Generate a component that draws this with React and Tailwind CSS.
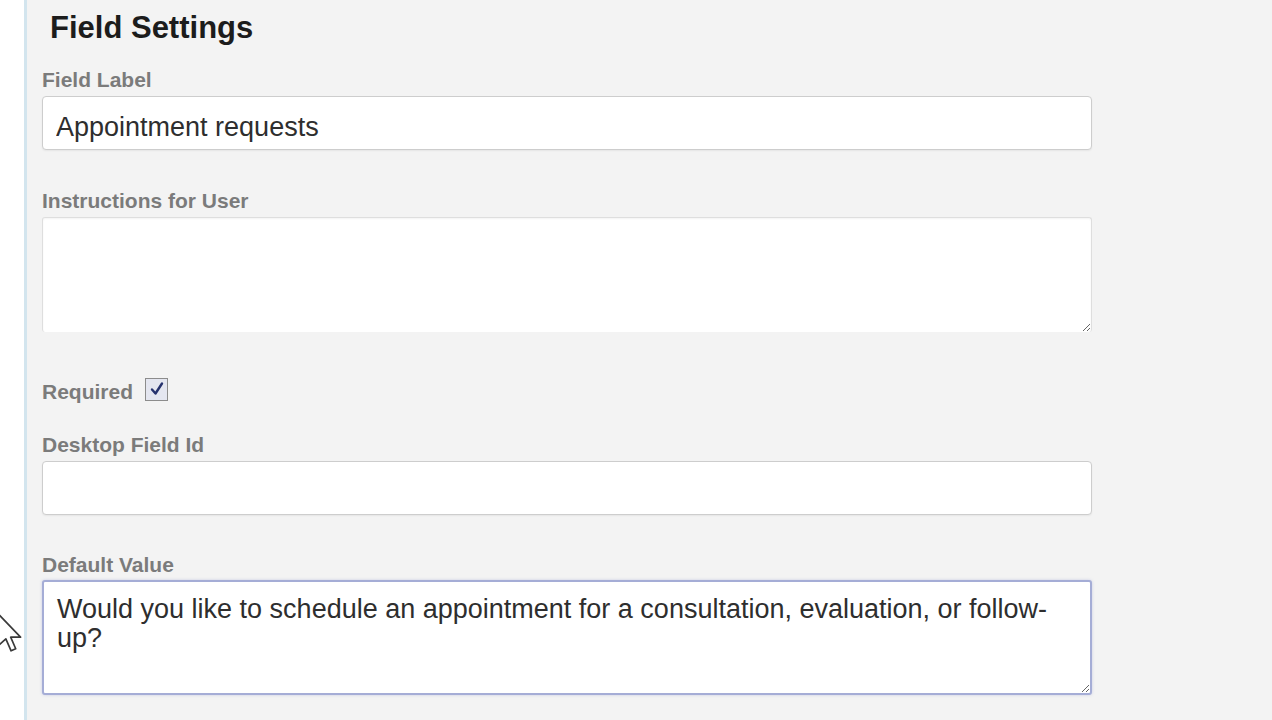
import React from 'react'

function Label({ children, className = '' }) {
  return (
    <label className={`block text-[21px] leading-[24px] font-bold text-[#7b7b7b] ${className}`}>
      {children}
    </label>
  )
}

function TextInput({ value = '' }) {
  return (
    <input
      type="text"
      defaultValue={value}
      className="block w-full h-[54px] px-[13px] pt-[9px] bg-white border border-[#cdcdcd] rounded-[4px] shadow-[0_1px_2px_rgba(0,0,0,0.06)] text-[27px] text-[#2e2e2e] outline-none"
    />
  )
}

function Cursor() {
  return (
    <svg
      className="absolute left-[-4px] top-[612px]"
      width="26"
      height="42"
      viewBox="0 0 12 20"
    >
      <path
        d="M1 1 L1 16 L4.5 12.8 L7 18.5 L9.2 17.5 L6.8 12 L11.5 12 Z"
        fill="#ffffff"
        stroke="#3a3a3a"
        strokeWidth="0.8"
        strokeLinejoin="round"
      />
    </svg>
  )
}

export default function App() {
  return (
    <div className="relative flex w-[1272px] h-[720px] overflow-hidden bg-[#f3f3f3] font-['Liberation_Sans',Arial,sans-serif]">
      <div className="w-[24px] shrink-0 bg-white" />
      <div className="w-[3px] shrink-0 bg-[#d3e5ee]" />

      <div className="w-[1065px] pl-[15px]">
        <h1 className="ml-[8px] pt-[10px] text-[31px] leading-[36px] font-bold text-[#1c1c1c]">
          Field Settings
        </h1>

        <Label className="mt-[22px] mb-[4px]">Field Label</Label>
        <TextInput value="Appointment requests" />

        <Label className="mt-[39px] mb-[4px]">Instructions for User</Label>
        <textarea
          defaultValue=""
          className="block w-full h-[115px] px-[13px] py-[12px] bg-white border border-[#dedede] border-b-0 rounded-[3px] shadow-[inset_0_1px_2px_rgba(0,0,0,0.05)] text-[27px] leading-[29px] text-[#2e2e2e] outline-none"
        />

        <div className="mt-[48px] flex items-center h-[24px]">
          <span className="text-[21px] leading-[24px] font-bold text-[#7b7b7b]">Required</span>
          <span className="ml-[12px] mb-[6px] flex items-center justify-center w-[23px] h-[23px] border border-[#8c8c8c] bg-[#e4e6f0]">
            <svg width="16" height="16" viewBox="0 0 16 16">
              <path
                d="M3 8.5 L6.5 12.5 L13 2.5"
                fill="none"
                stroke="#26326e"
                strokeWidth="2.4"
                strokeLinecap="round"
                strokeLinejoin="round"
              />
            </svg>
          </span>
        </div>

        <Label className="mt-[29px] mb-[4px]">Desktop Field Id</Label>
        <TextInput />

        <Label className="mt-[38px] mb-[3px]">Default Value</Label>
        <textarea
          defaultValue="Would you like to schedule an appointment for a consultation, evaluation, or follow-up?"
          className="block w-full h-[115px] px-[13px] pt-[13px] pb-[6px] bg-white border-2 border-[#a5add6] rounded-[3px] shadow-[0_0_3px_rgba(120,130,200,0.35)] text-[27px] leading-[29px] text-[#2e2e2e] outline-none"
        />
      </div>

      <Cursor />
    </div>
  )
}
